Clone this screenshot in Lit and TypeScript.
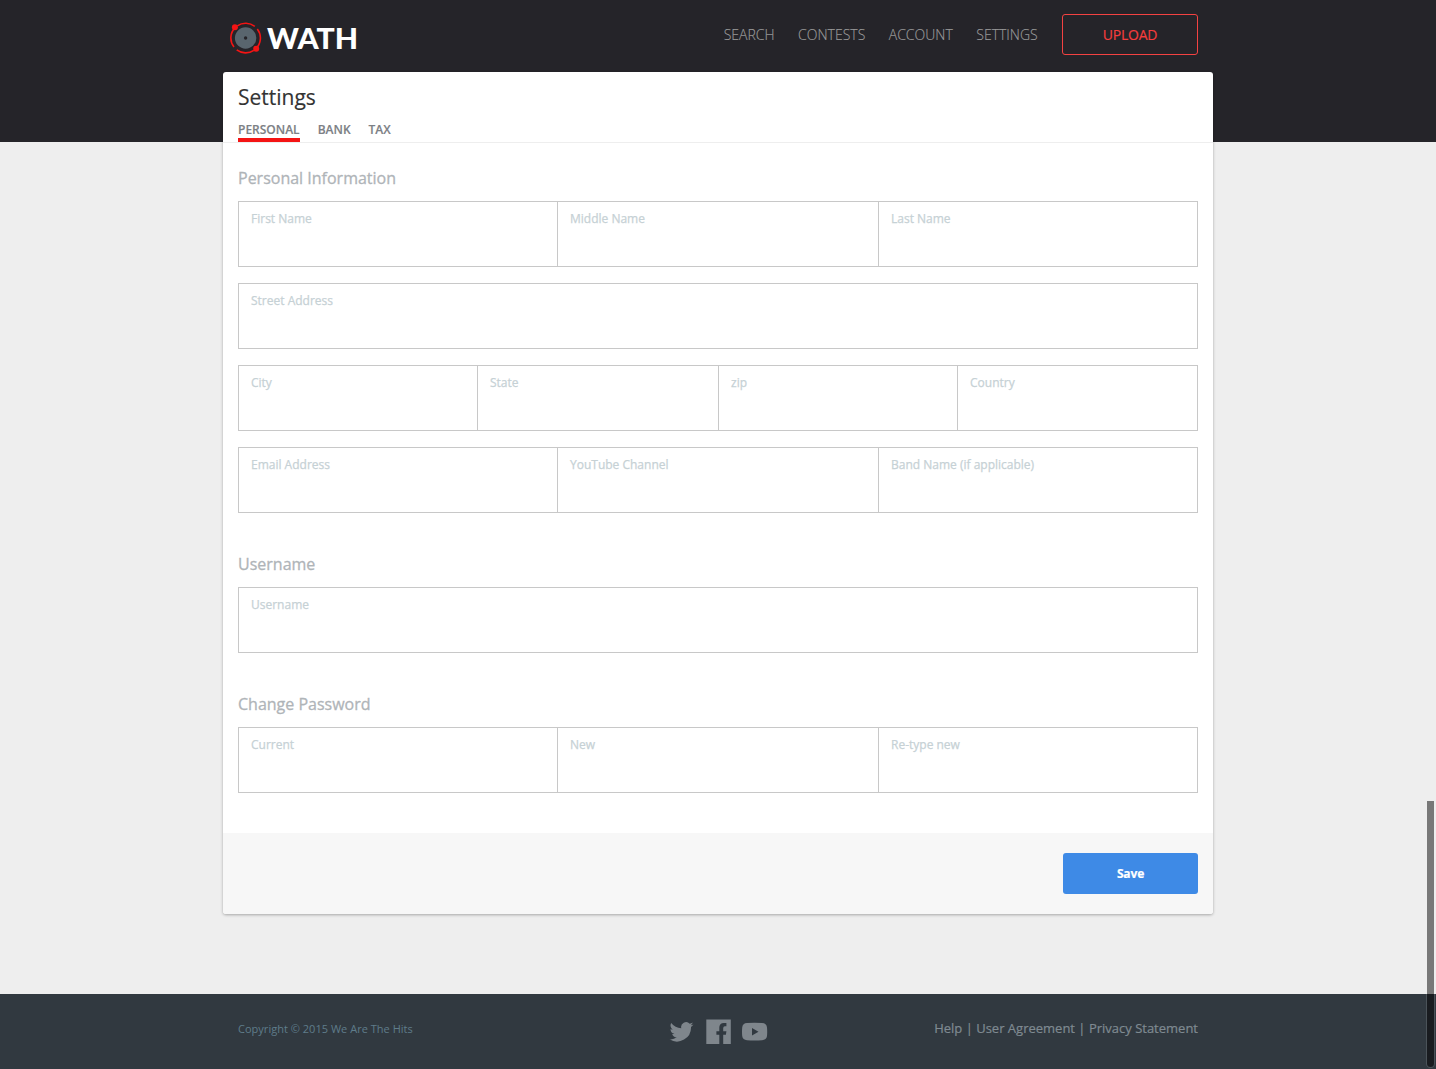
import { LitElement, html, css } from "lit";
import { customElement, property } from "lit/decorators.js";

@customElement("field-row")
class FieldRow extends LitElement {
  @property({ attribute: false }) labels: string[] = [];

  static styles = css`
    :host { display: block; }
    .row { display: grid; box-sizing: border-box; height: 66px; border: 1px solid #c8c8c8; border-left: 0; }
    .cols-1 { grid-template-columns: 1fr; }
    .cols-3 { grid-template-columns: 319px 321px 1fr; }
    .cols-4 { grid-template-columns: 239px 241px 239px 1fr; }
    .cell { border-left: 1px solid #c8c8c8; padding: 8px 12px; font-size: 12px; line-height: 17px; color: #c6d1d5; -webkit-text-stroke: 0.25px #c6d1d5; white-space: nowrap; }
  `;

  render() {
    return html`<div class="row cols-${this.labels.length}">
      ${this.labels.map((l) => html`<label class="cell">${l}</label>`)}
    </div>`;
  }
}

@customElement("app-root")
class AppRoot extends LitElement {
  static styles = css`
    :host { display: block; position: relative; height: 1069px; overflow: hidden; background: #eee; font-family: "Open Sans", sans-serif; }
    .page { display: flex; flex-direction: column; height: 1069px; }
    .top { flex: none; height: 142px; background: #252429; margin-bottom: -70px; }
    .bar { width: 990px; height: 72px; margin: 0 auto; display: flex; justify-content: space-between; box-sizing: border-box; padding: 14px 15px 0 6px; }
    .logo { display: block; width: 132px; height: 48px; }
    .logo text { font-family: Lato, sans-serif; font-weight: 900; font-size: 29px; fill: #fff; }
    nav { display: flex; align-items: center; height: 41px; font-size: 14px; font-weight: 300; color: #999; -webkit-text-stroke: 0.15px; }
    .link { margin-right: 23.5px; white-space: nowrap; }
    .upload { width: 136px; height: 41px; margin-left: 0.8px; box-sizing: border-box; border: 1px solid #f44242; border-radius: 3px; color: #f73d3d; display: flex; align-items: center; justify-content: center; font-weight: 400; letter-spacing: -0.2px; }
    .card { flex: none; position: relative; width: 990px; height: 842px; margin: 0 auto; background: #fff; border-radius: 3px; box-shadow: 0 1px 3px rgba(0,0,0,.3); display: flex; flex-direction: column; }
    .head { height: 71px; box-sizing: border-box; padding: 10px 15px 0; border-bottom: 1px solid #eee; }
    h1 { margin: 0; font-size: 21px; line-height: 30px; font-weight: 400; color: #333; -webkit-text-stroke: 0.15px; }
    .tabs { display: flex; gap: 18px; margin-top: 8px; font-size: 12px; font-weight: 600; line-height: 20px; color: #7c8085; -webkit-text-stroke: 0.15px; }
    .tab { height: 22px; box-sizing: border-box; }
    .active { border-bottom: 4px solid #f41414; }
    .body { flex: 1; padding: 0 15px; }
    h2 { margin: 0; font-size: 16px; line-height: 22px; font-weight: 400; color: #afb4b8; -webkit-text-stroke: 0.3px #afb4b8; padding: 24px 0 12px; }
    .rows { display: flex; flex-direction: column; gap: 16px; }
    .next h2 { padding-top: 40px; }
    .actions { height: 81px; box-sizing: border-box; padding: 20px 15px; background: #f7f7f7; border-radius: 0 0 3px 3px; display: flex; justify-content: flex-end; }
    .save { width: 135px; height: 41px; padding: 0; border: 0; border-radius: 3px; background: #3e8ae6; color: #fff; font: 700 12px "Open Sans", sans-serif; letter-spacing: -0.15px; -webkit-text-stroke: 0.2px; }
    footer { flex: none; height: 75px; margin-top: 80px; background: #313940; }
    .foot { width: 960px; height: 68px; margin: 0 auto; display: grid; grid-template-columns: 431px 1fr auto; align-items: center; }
    .copy { font-size: 11px; letter-spacing: 0.02px; color: #5f7c8a; }
    .social { display: block; width: 99px; height: 26px; margin-top: 7px; fill: #7f868c; }
    .links { font-size: 13px; color: #7f8a91; white-space: nowrap; -webkit-text-stroke: 0.2px; }
    .scroll { position: absolute; left: 1427px; top: 801px; width: 7px; height: 266px; border-radius: 0 0 4px 4px; overflow: hidden; background: linear-gradient(#787878 193px, #191c20 193px); }
    .rim { position: absolute; left: 1426px; top: 994px; width: 9px; height: 74px; border-radius: 0 0 5px 5px; background: #4b5359; }
  `;

  render() {
    return html`<div class="page">
      <header class="top"><div class="bar">
        <svg class="logo" viewBox="0 0 132 48">
          <circle cx="16.6" cy="24" r="10.7" fill="#59656e"/><circle cx="16.6" cy="24" r="1.7" fill="#252429"/>
          <g fill="none" stroke="#f41414" stroke-width="1.6">
            <path d="M8.3 11.8A14.8 14.8 0 0 1 25.8 12.4M28.3 14.9A14.8 14.8 0 0 1 26.8 34.7M24.9 36.3A14.8 14.8 0 0 1 7.7 35.9M5 33.1A14.8 14.8 0 0 1 6.1 13.6"/>
          </g>
          <circle cx="5.9" cy="13.2" r="3" fill="#f41414"/><circle cx="27.2" cy="34.7" r="3" fill="#f41414"/>
          <text x="38" y="35.3" textLength="91" lengthAdjust="spacingAndGlyphs">WATH</text>
        </svg>
        <nav>
          ${["SEARCH", "CONTESTS", "ACCOUNT", "SETTINGS"].map((t) => html`<span class="link">${t}</span>`)}
          <span class="upload">UPLOAD</span>
        </nav>
      </div></header>
      <main class="card">
        <div class="head"><h1>Settings</h1>
          <div class="tabs"><span class="tab active">PERSONAL</span><span class="tab">BANK</span><span class="tab">TAX</span></div>
        </div>
        <div class="body">
          <section><h2>Personal Information</h2><div class="rows">
            <field-row .labels=${["First Name", "Middle Name", "Last Name"]}></field-row>
            <field-row .labels=${["Street Address"]}></field-row>
            <field-row .labels=${["City", "State", "zip", "Country"]}></field-row>
            <field-row .labels=${["Email Address", "YouTube Channel", "Band Name (if applicable)"]}></field-row>
          </div></section>
          <section class="next"><h2>Username</h2><field-row .labels=${["Username"]}></field-row></section>
          <section class="next"><h2>Change Password</h2><field-row .labels=${["Current", "New", "Re-type new"]}></field-row></section>
        </div>
        <div class="actions"><button class="save">Save</button></div>
      </main>
      <footer><div class="foot">
        <span class="copy">Copyright © 2015 We Are The Hits</span>
        <svg class="social" viewBox="0 0 99 26">
          <path transform="translate(.5 .8)" d="M24 4.6a10 10 0 0 1-2.8.8 5 5 0 0 0 2.1-2.7 10 10 0 0 1-3.1 1.2 4.9 4.9 0 0 0-8.4 4.5A14 14 0 0 1 1.7 3.1a4.9 4.9 0 0 0 1.5 6.6 5 5 0 0 1-2.2-.6v.1a4.9 4.9 0 0 0 3.9 4.8 5 5 0 0 1-2.2.1 4.9 4.9 0 0 0 4.6 3.4A9.9 9.9 0 0 1 0 19.5 14 14 0 0 0 21.5 7.1 10 10 0 0 0 24 4.6z"/>
          <path fill-rule="evenodd" d="M37.3.5h24.500v24.500h-24.500zM50.300 25h3.900v-9.300h2.700l.5-3.400h-3.200V9.200q0-1.900 1.700-1.900h1.500V3.900h-2.500q-4.600 0-4.600 4.700v3.700h-2.900v3.400h2.900z"/>
          <path fill-rule="evenodd" d="M78 4Q85.500 3.500 93 4Q97.500 4 98 8.500Q98.400 13 98 17Q97.500 21 93 21.200Q85.500 21.800 78 21.200Q73.700 21 73.200 17Q72.800 13 73.200 8.500Q73.700 4 78 4zM83 8.900v7.600l6.500-3.800z"/>
        </svg>
        <span class="links">Help | User Agreement | Privacy Statement</span>
      </div></footer>
    </div>
    <div class="rim"></div><div class="scroll"></div>`;
  }
}
